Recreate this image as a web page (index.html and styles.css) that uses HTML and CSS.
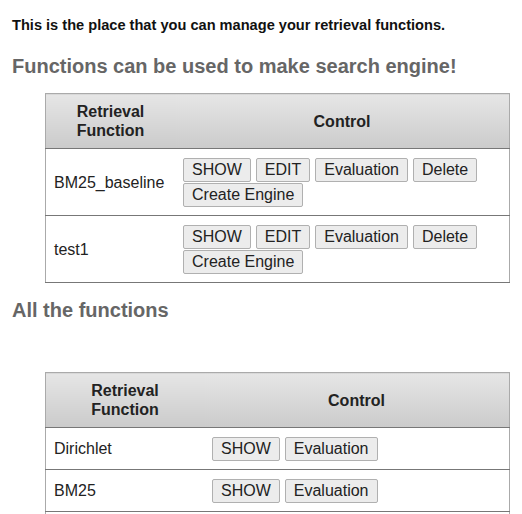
FILE: index.html
```html
<!DOCTYPE html>
<html>
<head>
<meta charset="utf-8">
<link rel="stylesheet" href="styles.css">
</head>
<body>
<div class="page">
  <p class="intro">This is the place that you can manage your retrieval functions.</p>
  <h2 class="section-title">Functions can be used to make search engine!</h2>
  <table class="func-table mine">
    <thead>
      <tr><th class="col-name">Retrieval<br>Function</th><th>Control</th></tr>
    </thead>
    <tbody>
      <tr>
        <td class="col-name">BM25_baseline</td>
        <td><div class="controls"><button>SHOW</button><button>EDIT</button><button>Evaluation</button><button>Delete</button><button>Create Engine</button></div></td>
      </tr>
      <tr>
        <td class="col-name">test1</td>
        <td><div class="controls"><button>SHOW</button><button>EDIT</button><button>Evaluation</button><button>Delete</button><button>Create Engine</button></div></td>
      </tr>
    </tbody>
  </table>
  <h3 class="sub-title">All the functions</h3>
  <table class="func-table all">
    <thead>
      <tr><th class="col-name">Retrieval<br>Function</th><th>Control</th></tr>
    </thead>
    <tbody>
      <tr>
        <td class="col-name">Dirichlet</td>
        <td><div class="controls"><button>SHOW</button><button>Evaluation</button></div></td>
      </tr>
      <tr>
        <td class="col-name">BM25</td>
        <td><div class="controls"><button>SHOW</button><button>Evaluation</button></div></td>
      </tr>
      <tr>
        <td class="col-name">Pivoted</td>
        <td><div class="controls"><button>SHOW</button><button>Evaluation</button></div></td>
      </tr>
    </tbody>
  </table>
</div>
</body>
</html>
```
FILE: styles.css
```css
html, body {
  margin: 0;
  padding: 0;
  background: #fff;
}
body {
  font-family: "Liberation Sans", Arial, sans-serif;
  color: #222;
}
.page {
  padding: 0 12px;
}
.intro {
  margin: 0;
  padding-top: 17px;
  font-size: 14.6px;
  font-weight: bold;
  line-height: 17px;
  color: #111;
}
.section-title {
  margin: 20px 0 0;
  font-size: 20px;
  line-height: 24px;
  color: #666;
}
.sub-title {
  margin: 15px 0 0;
  font-size: 20px;
  line-height: 24px;
  color: #666;
}
.func-table {
  border-collapse: collapse;
  width: 465px;
  margin-left: 33px;
  border: 1px solid #aaa;
  font-size: 16px;
}
.func-table.mine {
  margin-top: 15px;
}
.func-table.all {
  margin-top: 50px;
}
.func-table.mine .col-name {
  width: 113px;
}
.func-table.all .col-name {
  width: 142px;
}
.func-table th {
  padding: 8px;
  line-height: 19px;
  font-weight: bold;
  color: #222;
  text-align: center;
  background: linear-gradient(to bottom, #e6e6e6, #cbcbcb);
  border-bottom: 1px solid #777;
}
.func-table td {
  padding: 9px 8px 8px;
  line-height: 18px;
  text-align: left;
  vertical-align: middle;
  border-bottom: 1px solid #777;
}
.controls {
  display: flex;
  flex-wrap: wrap;
  gap: 1px 5px;
}
.controls button {
  font-family: "Liberation Sans", Arial, sans-serif;
  font-size: 16px;
  line-height: 18px;
  color: #222;
  padding: 2px 8px;
  background: #ececec;
  border: 1px solid #b0b0b0;
  border-radius: 2px;
  margin: 0;
}
```
